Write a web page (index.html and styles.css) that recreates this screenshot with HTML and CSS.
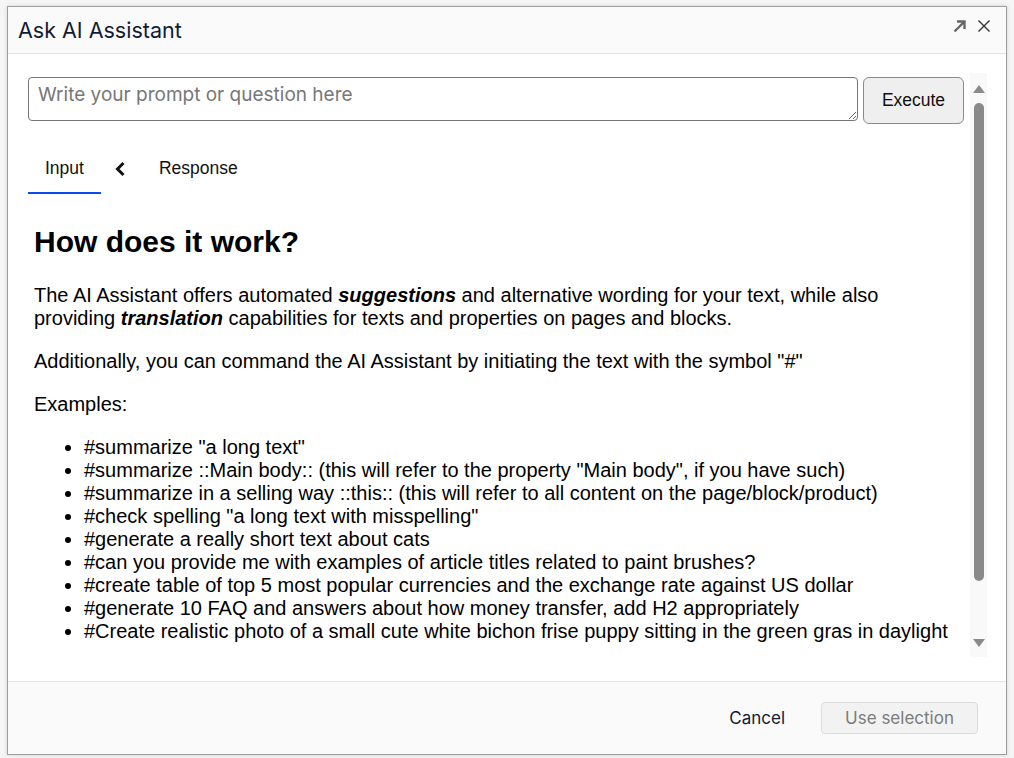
FILE: index.html
```html
<!DOCTYPE html>
<html lang="en">
<head>
    <meta charset="UTF-8">
    <meta name="viewport" content="width=device-width, initial-scale=1.0">
    <title>Ask AI Assistant</title>
    <link rel="stylesheet" href="styles.css">
</head>
<body>
    <div class="dialog">
        <div class="dialog-header">
            <h1 class="dialog-title">Ask AI Assistant</h1>
            <div class="header-actions">
                <button class="icon-btn expand" title="Open in new window">
                    <svg width="14" height="14" viewBox="0 0 14 14"><path d="M1.5 12.5 L11.5 2.5 M4 2.5 H11.5 V10" fill="none" stroke="#666" stroke-width="2.4"/></svg>
                </button>
                <button class="icon-btn close" title="Close">
                    <svg width="14" height="14" viewBox="0 0 14 14"><path d="M1.5 1.5 L12.5 12.5 M12.5 1.5 L1.5 12.5" fill="none" stroke="#333" stroke-width="1.4"/></svg>
                </button>
            </div>
        </div>

        <div class="dialog-body">
            <div class="scroll-area">
                <div class="prompt-row">
                    <textarea class="prompt" placeholder="Write your prompt or question here"></textarea>
                    <button class="execute">Execute</button>
                </div>

                <div class="tabs">
                    <div class="tab active">Input</div>
                    <div class="tab-arrow">
                        <svg width="12" height="16" viewBox="0 0 12 16"><path d="M9.5 2 L3.5 8 L9.5 14" fill="none" stroke="#111" stroke-width="3"/></svg>
                    </div>
                    <div class="tab">Response</div>
                </div>

                <div class="content">
                    <h2>How does it work?</h2>
                    <p>The AI Assistant offers automated <b><i>suggestions</i></b> and alternative wording for your text, while also providing <b><i>translation</i></b> capabilities for texts and properties on pages and blocks.</p>
                    <p>Additionally, you can command the AI Assistant by initiating the text with the symbol "#"</p>
                    <p>Examples:</p>
                    <ul>
                        <li>#summarize "a long text"</li>
                        <li>#summarize ::Main body:: (this will refer to the property "Main body", if you have such)</li>
                        <li>#summarize in a selling way ::this:: (this will refer to all content on the page/block/product)</li>
                        <li>#check spelling "a long text with misspelling"</li>
                        <li>#generate a really short text about cats</li>
                        <li>#can you provide me with examples of article titles related to paint brushes?</li>
                        <li>#create table of top 5 most popular currencies and the exchange rate against US dollar</li>
                        <li>#generate 10 FAQ and answers about how money transfer, add H2 appropriately</li>
                        <li>#Create realistic photo of a small cute white bichon frise puppy sitting in the green gras in daylight</li>
                    </ul>
                </div>
            </div>

            <div class="scrollbar">
                <div class="arrow-up"></div>
                <div class="track"><div class="thumb"></div></div>
                <div class="arrow-down"></div>
            </div>
        </div>

        <div class="dialog-footer">
            <button class="cancel">Cancel</button>
            <button class="use-selection" disabled>Use selection</button>
        </div>
    </div>
</body>
</html>
```

FILE: styles.css
```css
body {
    margin: 0;
    padding: 0;
    background: #f5f5f5;
    font-family: Inter, "Liberation Sans", sans-serif;
    height: 758px;
    overflow: hidden;
}

.dialog {
    margin: 6px 0 0 7px;
    width: 998px;
    height: 747px;
    border: 1px solid #9e9e9e;
    background: #fff;
    display: flex;
    flex-direction: column;
    box-shadow: 0 0 4px rgba(0, 0, 0, 0.15);
}

.dialog-header {
    height: 46px;
    background: #fafafa;
    border-bottom: 1px solid #e2e2e2;
    display: flex;
    align-items: center;
    justify-content: space-between;
    padding: 0 15px 0 10px;
}

.dialog-title {
    margin: 0;
    font-size: 21.5px;
    font-weight: 400;
    color: #121a33;
}

.header-actions {
    display: flex;
    gap: 10px;
    margin-top: -8px;
}

.icon-btn {
    border: none;
    background: none;
    padding: 0;
    width: 14px;
    height: 14px;
    cursor: pointer;
}

.dialog-body {
    flex: 1;
    display: flex;
    padding: 19px 19px 24px 20px;
    overflow: hidden;
}

.scroll-area {
    flex: 1;
    overflow: hidden;
    padding-right: 6px;
}

.prompt-row {
    display: flex;
    gap: 5px;
    margin-top: 4px;
}

.prompt {
    flex: 1;
    height: 44px;
    box-sizing: border-box;
    border: 1px solid #767676;
    border-radius: 4px;
    padding: 5px 9px;
    font-family: Inter, sans-serif;
    font-size: 19px;
    resize: vertical;
}

.prompt::placeholder {
    color: #777;
}

.execute {
    width: 101px;
    height: 47px;
    border: 1px solid #8a8a8a;
    border-radius: 6px;
    background: #efefef;
    font-family: "Liberation Sans", Arial, sans-serif;
    font-size: 17.5px;
    color: #111;
    cursor: pointer;
}

.tabs {
    display: flex;
    align-items: center;
    margin-top: 26px;
    font-family: "Liberation Sans", Arial, sans-serif;
    font-size: 17.5px;
    color: #111;
}

.tab {
    padding: 8px 17px 13px;
    border-bottom: 2px solid transparent;
}

.tab.active {
    border-bottom-color: #0a4bf0;
}

.tab-arrow {
    margin: -6px 16px 0 13px;
    display: flex;
}

.content {
    padding: 6px 6px 0;
    font-family: "Liberation Sans", Arial, sans-serif;
    font-size: 20px;
    color: #000;
}

.content h2 {
    font-size: 30px;
    margin: 25px 0 25px;
}

.content p {
    margin: 0 0 20px;
}

.content ul {
    margin: 20px 0;
    padding-left: 50px;
}

.scrollbar {
    width: 17px;
    background: #f9f9f9;
    display: flex;
    flex-direction: column;
    align-items: center;
}

.arrow-up,
.arrow-down {
    width: 0;
    height: 0;
    border-left: 6px solid transparent;
    border-right: 6px solid transparent;
}

.arrow-up {
    border-bottom: 8px solid #8a8a8a;
    margin: 12px 0 6px;
}

.arrow-down {
    border-top: 8px solid #8a8a8a;
    margin: 6px 0 10px;
}

.track {
    flex: 1;
    width: 100%;
    display: flex;
    justify-content: center;
}

.thumb {
    width: 10px;
    height: 478px;
    margin-top: 4px;
    border-radius: 5px;
    background: #8a8a8a;
}

.dialog-footer {
    height: 72px;
    background: #fafafa;
    border-top: 1px solid #e2e2e2;
    display: flex;
    align-items: center;
    justify-content: flex-end;
    padding: 0 28px 0 0;
    gap: 20px;
}

.cancel {
    border: none;
    background: none;
    font-family: Inter, sans-serif;
    font-size: 17px;
    color: #121a33;
    padding: 6px 16px;
    cursor: pointer;
}

.use-selection {
    width: 157px;
    height: 32px;
    border: 1px solid #dcdcdc;
    border-radius: 4px;
    background: #f2f2f2;
    font-family: Inter, sans-serif;
    font-size: 17px;
    color: #7b7b7b;
}
```
